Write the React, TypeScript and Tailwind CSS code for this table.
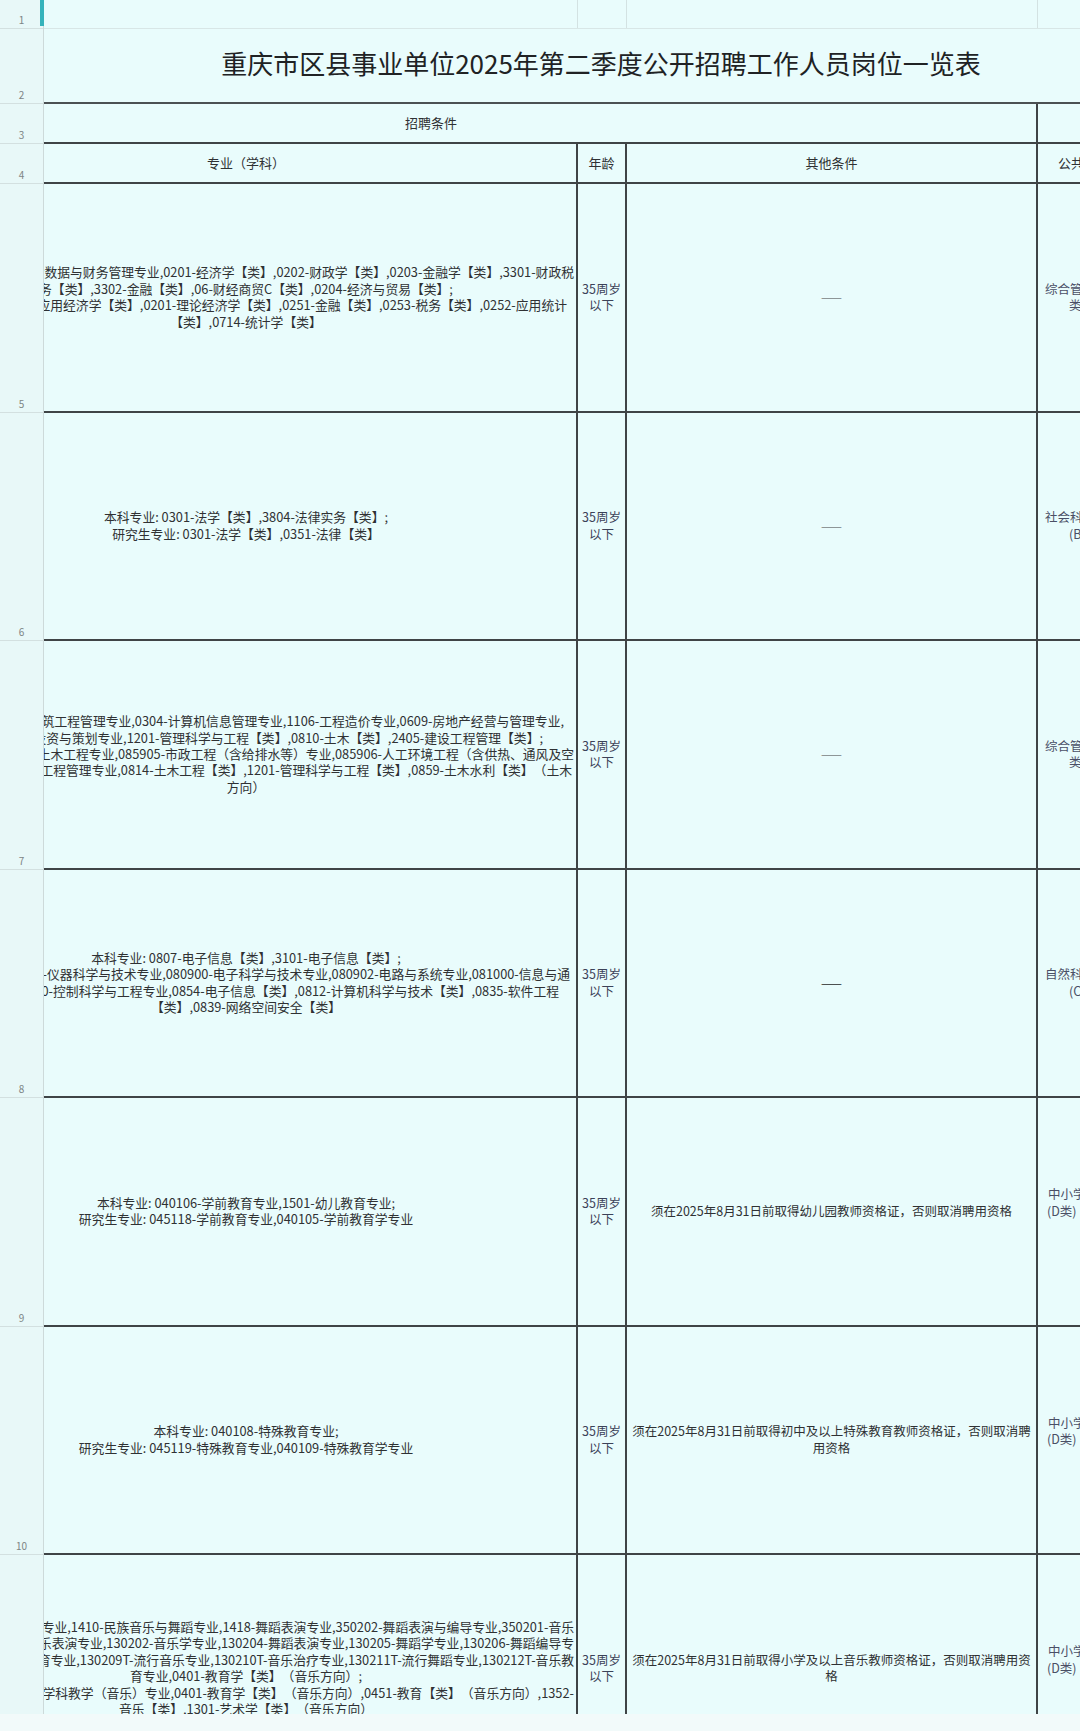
import React from "react"

type Line = { t: string; r?: number }

type Row = {
  num: string
  major: Line[]
  other: string[]
  dark?: boolean
  cat: { t: string; cls: string }[]
  catCls?: string
}

const rows: Row[] = [
  {
    num: "5",
    major: [
      { t: "本科专业: 1203-大数据与财务管理专业,0201-经济学【类】,0202-财政学【类】,0203-金融学【类】,3301-财政税", r: 574 },
      { t: "务【类】,3302-金融【类】,06-财经商贸C【类】,0204-经济与贸易【类】;" },
      { t: "研究生专业: 0202-应用经济学【类】,0201-理论经济学【类】,0251-金融【类】,0253-税务【类】,0252-应用统计", r: 567 },
      { t: "【类】,0714-统计学【类】" },
    ],
    other: ["——"],
    cat: [
      { t: "综合管理类（A", cls: "pl-[7px]" },
      { t: "类）", cls: "pl-[31px]" },
    ],
  },
  {
    num: "6",
    major: [
      { t: "本科专业: 0301-法学【类】,3804-法律实务【类】;" },
      { t: "研究生专业: 0301-法学【类】,0351-法律【类】" },
    ],
    other: ["——"],
    cat: [
      { t: "社会科学专技类", cls: "pl-[7px]" },
      { t: "(B类)", cls: "pl-[31px]" },
    ],
  },
  {
    num: "7",
    major: [
      { t: "本科专业: 120103-工程管理专业,120105-建筑工程管理专业,0304-计算机信息管理专业,1106-工程造价专业,0609-房地产经营与管理专业,", r: 564 },
      { t: "0610-房地产投资与策划专业,1201-管理科学与工程【类】,0810-土木【类】,2405-建设工程管理【类】;", r: 543 },
      { t: "研究生专业: 081401-土木工程专业,085905-市政工程（含给排水等）专业,085906-人工环境工程（含供热、通风及空", r: 574 },
      { t: "调工程）专业,125601-工程管理专业,0814-土木工程【类】,1201-管理科学与工程【类】,0859-土木水利【类】（土木", r: 572 },
      { t: "方向）" },
    ],
    other: ["——"],
    cat: [
      { t: "综合管理类（A", cls: "pl-[7px]" },
      { t: "类）", cls: "pl-[31px]" },
    ],
  },
  {
    num: "8",
    major: [
      { t: "本科专业: 0807-电子信息【类】,3101-电子信息【类】;" },
      { t: "研究生专业: 080400-仪器科学与技术专业,080900-电子科学与技术专业,080902-电路与系统专业,081000-信息与通", r: 570 },
      { t: "信与信息系统专业,081100-控制科学与工程专业,0854-电子信息【类】,0812-计算机科学与技术【类】,0835-软件工程", r: 559 },
      { t: "【类】,0839-网络空间安全【类】" },
    ],
    other: ["——"],
    dark: true,
    cat: [
      { t: "自然科学专技类", cls: "pl-[7px]" },
      { t: "(C类)", cls: "pl-[31px]" },
    ],
  },
  {
    num: "9",
    major: [
      { t: "本科专业: 040106-学前教育专业,1501-幼儿教育专业;" },
      { t: "研究生专业: 045118-学前教育专业,040105-学前教育学专业" },
    ],
    other: ["须在2025年8月31日前取得幼儿园教师资格证，否则取消聘用资格"],
    cat: [
      { t: "中小学教师类", cls: "pl-[10px]" },
      { t: "(D类)", cls: "pl-[9px]" },
    ],
    catCls: "pb-[17px]",
  },
  {
    num: "10",
    major: [
      { t: "本科专业: 040108-特殊教育专业;" },
      { t: "研究生专业: 045119-特殊教育专业,040109-特殊教育学专业" },
    ],
    other: ["须在2025年8月31日前取得初中及以上特殊教育教师资格证，否则取消聘", "用资格"],
    cat: [
      { t: "中小学教师类", cls: "pl-[10px]" },
      { t: "(D类)", cls: "pl-[9px]" },
    ],
    catCls: "pb-[17px]",
  },
  {
    num: "11",
    major: [
      { t: "本科专业: 1302-音乐与舞蹈学【类】,1409-音乐表演专业,1410-民族音乐与舞蹈专业,1418-舞蹈表演专业,350202-舞蹈表演与编导专业,350201-音乐", r: 574 },
      { t: "表演专业,130201-音乐表演专业,130202-音乐学专业,130204-舞蹈表演专业,130205-舞蹈学专业,130206-舞蹈编导专", r: 574 },
      { t: "业,130207-舞蹈教育专业,130209T-流行音乐专业,130210T-音乐治疗专业,130211T-流行舞蹈专业,130212T-音乐教", r: 574 },
      { t: "育专业,0401-教育学【类】（音乐方向）;" },
      { t: "研究生专业: 045111-学科教学（音乐）专业,0401-教育学【类】（音乐方向）,0451-教育【类】（音乐方向）,1352-", r: 574 },
      { t: "音乐【类】,1301-艺术学【类】（音乐方向）" },
    ],
    other: ["须在2025年8月31日前取得小学及以上音乐教师资格证，否则取消聘用资", "格"],
    cat: [
      { t: "中小学教师类", cls: "pl-[10px]" },
      { t: "(D类)", cls: "pl-[9px]" },
    ],
    catCls: "pb-[17px]",
  },
]

const headNums = [
  { n: "1", h: "h-[29px]" },
  { n: "2", h: "h-[75px]" },
  { n: "3", h: "h-[40px]" },
  { n: "4", h: "h-[40px]" },
]

export default function App() {
  return (
    <div className="w-[1080px] h-[1731px] bg-[#f2fafa] font-['Noto_Sans_CJK_SC','Noto_Sans',sans-serif] text-[#2f3133] [text-spacing-trim:space-all]">
      <div className="flex h-[1714px] overflow-hidden bg-[#e9fcfc]">
        {/* row numbers */}
        <div className="w-[44px] shrink-0 flex flex-col border-r border-[#cddada] bg-[#e8f8f8]">
          {headNums.map((r) => (
            <div
              key={r.n}
              className={`${r.h} shrink-0 relative flex items-end justify-center pb-[2px] border-b border-[#d3e0e0] text-[10px] leading-[12px] text-[#7d8585]`}
            >
              {r.n}
              {r.n === "1" && <div className="absolute right-[-1px] top-0 h-[26px] w-[4px] bg-[#35b3bb]" />}
            </div>
          ))}
          {rows.map((r) => (
            <div
              key={r.num}
              className="h-[228.5px] shrink-0 flex items-end justify-center pb-[2px] border-b border-[#d3e0e0] text-[10px] leading-[12px] text-[#7d8585]"
            >
              {r.num}
            </div>
          ))}
        </div>

        {/* sheet */}
        <div className="flex-1 overflow-hidden flex flex-col">
          {/* row 1 */}
          <div className="h-[29px] shrink-0 flex border-b border-[#d8e6e6]">
            <div className="w-[662px] -ml-[128px] shrink-0 border-r border-[#d3e2e2]" />
            <div className="w-[49px] shrink-0 border-r border-[#d3e2e2]" />
            <div className="w-[411px] shrink-0 border-r border-[#d3e2e2]" />
          </div>

          {/* row 2 title */}
          <div className="h-[75px] shrink-0 flex items-center justify-center pl-[78px] pb-[6px] border-b-2 border-[#4b5153]">
            <div className="text-[26px] leading-[32px] text-[#202224] whitespace-nowrap">
              重庆市区县事业单位2025年第二季度公开招聘工作人员岗位一览表
            </div>
          </div>

          {/* row 3 */}
          <div className="h-[40px] shrink-0 flex border-b-2 border-[#3f4446]">
            <div className="w-[994px] shrink-0 flex items-center justify-center pr-[218px] border-r-2 border-[#3f4446] text-[13px]">
              招聘条件
            </div>
          </div>

          {/* row 4 */}
          <div className="h-[40px] shrink-0 flex border-b-2 border-[#3f4446] text-[13px]">
            <div className="w-[662px] -ml-[128px] shrink-0 flex items-center justify-center border-r-2 border-[#3f4446]">
              专业（学科）
            </div>
            <div className="w-[49px] shrink-0 flex items-center justify-center border-r-2 border-[#3f4446]">年龄</div>
            <div className="w-[411px] shrink-0 flex items-center justify-center border-r-2 border-[#3f4446]">其他条件</div>
            <div className="w-[200px] shrink-0 flex items-center pl-[20px] whitespace-nowrap">公共科目笔试类别</div>
          </div>

          {/* data rows */}
          {rows.map((r) => (
            <div key={r.num} className="h-[228.5px] shrink-0 flex border-b-2 border-[#3f4446] text-[12.5px] leading-[16.4px]">
              <div className="w-[662px] -ml-[128px] shrink-0 flex flex-col justify-center border-r-2 border-[#3f4446] text-[12.8px]">
                {r.major.map((l, i) =>
                  l.r ? (
                    <div key={i} className="flex justify-end whitespace-nowrap" style={{ paddingRight: 576 - l.r }}>
                      {l.t}
                    </div>
                  ) : (
                    <div key={i} className="text-center whitespace-nowrap">
                      {l.t}
                    </div>
                  )
                )}
              </div>
              <div className="w-[49px] shrink-0 flex flex-col items-center justify-center border-r-2 border-[#3f4446] text-[#3c4258]">
                <div>35周岁</div>
                <div>以下</div>
              </div>
              <div className="w-[411px] shrink-0 flex flex-col items-center justify-center border-r-2 border-[#3f4446]">
                {r.other.map((o, i) => (
                  <div key={i} className={o === "——" ? (r.dark ? "text-[#2a2a2a]" : "text-[#7a7f80]") : "whitespace-nowrap"}>
                    {o}
                  </div>
                ))}
              </div>
              <div className={`w-[200px] shrink-0 flex flex-col justify-center text-[#4a4f66] ${r.catCls ?? ""}`}>
                {r.cat.map((c, i) => (
                  <div key={i} className={`whitespace-nowrap ${c.cls}`}>
                    {c.t}
                  </div>
                ))}
              </div>
            </div>
          ))}
        </div>
      </div>
    </div>
  )
}
